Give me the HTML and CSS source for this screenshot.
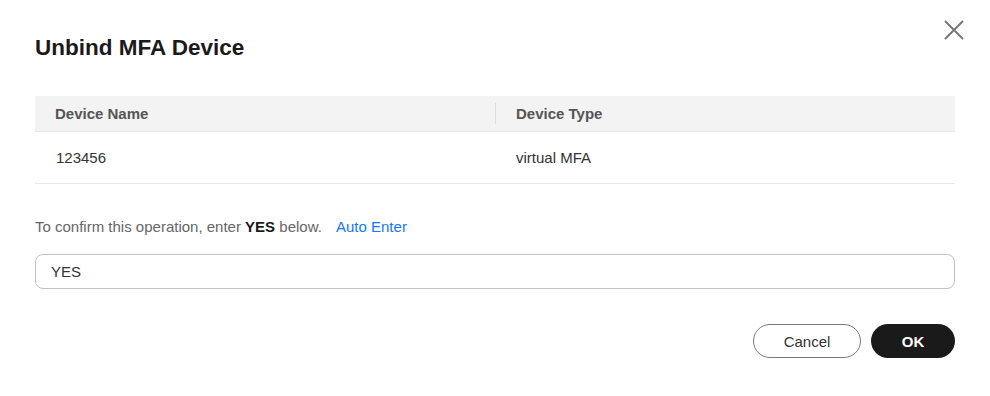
FILE: index.html
```html
<!DOCTYPE html>
<html lang="en">
<head>
    <meta charset="UTF-8">
    <meta name="viewport" content="width=device-width, initial-scale=1.0">
    <title>Unbind MFA Device</title>
    <link rel="stylesheet" href="styles.css">
</head>
<body>
    <div class="dialog">
        <div class="dialog-header">
            <h2>Unbind MFA Device</h2>
            <button class="close-button" aria-label="Close">
                <svg width="20" height="20" viewBox="0 0 20 20">
                    <path d="M1 1 L19 19 M19 1 L1 19" stroke="#777" stroke-width="2" fill="none"/>
                </svg>
            </button>
        </div>

        <div class="device-table">
            <div class="table-head">
                <div class="cell">Device Name</div>
                <div class="cell with-divider">Device Type</div>
            </div>
            <div class="table-row">
                <div class="cell">123456</div>
                <div class="cell">virtual MFA</div>
            </div>
        </div>

        <p class="confirm-tip">
            To confirm this operation, enter <strong>YES</strong> below.
            <a href="#" class="auto-enter">Auto Enter</a>
        </p>
        <input type="text" class="confirm-input" value="YES">

        <div class="dialog-footer">
            <button class="btn btn-cancel">Cancel</button>
            <button class="btn btn-ok">OK</button>
        </div>
    </div>
</body>
</html>
```

FILE: styles.css
```css
body {
    font-family: "Liberation Sans", Arial, sans-serif;
    margin: 0;
    padding: 0;
    background-color: white;
    color: #333;
}
.dialog {
    padding: 20px 35px 0;
}
.dialog-header {
    display: flex;
    justify-content: space-between;
    align-items: flex-start;
}
.dialog-header h2 {
    margin: 13px 0 0;
    font-size: 22.5px;
    line-height: 30px;
    font-weight: bold;
    color: #1a1a1a;
}
.close-button {
    width: 20px;
    height: 20px;
    padding: 0;
    margin-right: -9px;
    border: none;
    background: none;
    cursor: pointer;
    display: flex;
}
.device-table {
    margin-top: 33px;
    font-size: 15px;
}
.table-head,
.table-row {
    display: grid;
    grid-template-columns: 1fr 1fr;
    border-bottom: 1px solid #e8e8e8;
}
.table-head {
    height: 35px;
    background-color: #f3f3f3;
    font-weight: bold;
    color: #555;
}
.table-row {
    height: 51px;
    color: #333;
}
.cell {
    display: flex;
    align-items: center;
    padding-left: 20px;
}
.table-row .cell {
    padding-left: 21px;
}
.with-divider {
    border-left: 1px solid #dcdcdc;
    margin: 7px 0;
}
.confirm-tip {
    margin: 33px 0 0;
    font-size: 15px;
    line-height: 20px;
    color: #666;
}
.confirm-tip strong {
    color: #1a1a1a;
}
.auto-enter {
    color: #1476ff;
    text-decoration: none;
    margin-left: 10px;
}
.confirm-input {
    display: block;
    box-sizing: border-box;
    width: 100%;
    height: 35px;
    margin-top: 17px;
    padding: 0 15px;
    border: 1px solid #c2c2c2;
    border-radius: 8px;
    font-family: inherit;
    font-size: 15px;
    color: #333;
    outline: none;
}
.dialog-footer {
    display: flex;
    justify-content: flex-end;
    gap: 10px;
    margin-top: 35px;
}
.btn {
    height: 34px;
    border-radius: 17px;
    font-family: inherit;
    font-size: 15px;
    cursor: pointer;
}
.btn-cancel {
    width: 108px;
    background-color: white;
    border: 1px solid #7a7a7a;
    color: #333;
}
.btn-ok {
    width: 84px;
    background-color: #1a1a1a;
    border: none;
    color: white;
    font-weight: bold;
}
```
